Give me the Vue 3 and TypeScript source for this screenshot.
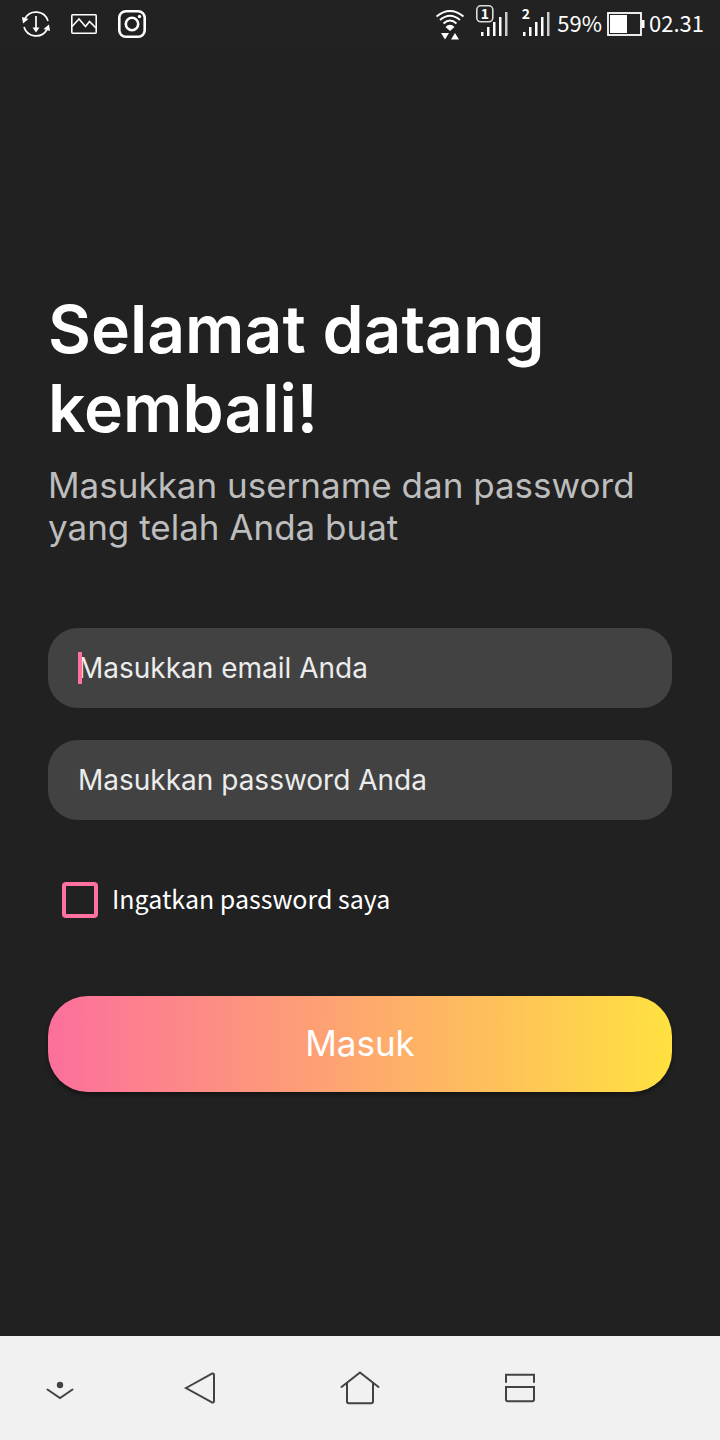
<script setup lang="ts">
import { ref } from 'vue'

interface Signal {
  sim: string
  boxed: boolean
  bars: { x: number; top: number }[]
}

const bars = [
  { x: 6, top: 32 },
  { x: 12, top: 27 },
  { x: 18, top: 22 },
  { x: 24, top: 17 },
  { x: 30, top: 12 },
]

const signals: Signal[] = [
  { sim: '1', boxed: true, bars },
  { sim: '2', boxed: false, bars },
]

const email = ref('')
const password = ref('')
const remember = ref(false)
</script>

<template>
  <div class="screen">
    <header class="status">
      <div class="notices">
        <svg width="28" height="28" viewBox="0 0 28 28" fill="none" stroke="#fff" stroke-width="1.7">
          <path d="M3 8.5A12.6 12.6 0 0 1 26 11" />
          <path d="M25 19.5A12.6 12.6 0 0 1 2 17" />
          <path d="M14 6v14" />
          <path d="M10.5 17.5h7L14 22.500z M0 7l6.500 2-5.500 4.500z M28 21L21.500 19l5.500-4.500z" fill="#fff" stroke="none" />
        </svg>
        <svg width="28" height="28" viewBox="0 0 28 28" fill="none" stroke="#fff" stroke-width="1.6">
          <rect x="1.800" y="4.800" width="24.400" height="18.400" rx="1" />
          <path d="M2 16.500l7-7.500 6.500 7.500 4-5 6.500 6.500" />
        </svg>
        <svg width="28" height="28" viewBox="0 0 28 28" fill="none" stroke="#fff" stroke-width="2.600">
          <rect x="1.300" y="1.300" width="25.400" height="25.400" rx="6.500" />
          <circle cx="14" cy="14" r="6.200" />
          <circle cx="21.500" cy="6.500" r="1.700" fill="#fff" stroke="none" />
        </svg>
      </div>
      <div class="system">
        <svg class="wifi" width="30" height="48" viewBox="0 0 30 48" fill="none" stroke="#fff" stroke-width="1.900">
          <path d="M1.500 16.500Q15 5.500 28.500 16.500M5 20Q15 11.500 25 20M8.500 23.500Q15 17.500 21.500 23.500" />
          <path d="M10.500 27Q15 22.500 19.500 27L15 31z M6 33h8l-4 6.500z M16 39.500h8L20 33z" fill="#fff" stroke="none" />
        </svg>
        <svg v-for="s in signals" :key="s.sim" class="signal" width="35" height="48" viewBox="0 0 35 48">
          <rect v-if="s.boxed" x="1.800" y="5.800" width="16" height="16" rx="4" fill="none" stroke="#ddd" stroke-width="1.600" />
          <text :x="s.boxed ? 10 : 9" y="19" class="sim">{{ s.sim }}</text>
          <rect v-for="b in s.bars" :key="b.x" :x="b.x" :y="b.top" width="2.500" :height="36 - b.top" :fill="b.x === 30 ? '#ccc' : '#fff'" />
        </svg>
        <span class="reading">59%</span>
        <svg class="battery" width="38" height="24" viewBox="0 0 38 24">
          <rect x="1" y="1" width="33" height="22" fill="none" stroke="#fff" stroke-width="1.800" />
          <rect x="3" y="3" width="17" height="18" fill="#fff" />
          <rect x="35" y="8" width="2.500" height="8" fill="#fff" />
        </svg>
        <time class="reading">02.31</time>
      </div>
    </header>

    <main class="content">
      <h1>Selamat datang kembali!</h1>
      <p class="intro">Masukkan username dan password yang telah Anda buat</p>

      <form @submit.prevent>
        <div class="fields">
          <div class="field">
            <input v-model="email" type="email" aria-label="Email" placeholder="Masukkan email Anda" />
            <span v-if="!email" class="caret" aria-hidden="true"></span>
          </div>
          <div class="field">
            <input v-model="password" type="password" aria-label="Password" placeholder="Masukkan password Anda" />
          </div>
        </div>
        <label class="remember">
          <input v-model="remember" type="checkbox" />
          <span>Ingatkan password saya</span>
        </label>
        <button class="submit" type="submit">Masuk</button>
      </form>
    </main>

    <nav class="navbar">
      <button type="button" aria-label="Sembunyikan">
        <svg width="40" height="40" viewBox="0 0 40 40">
          <circle cx="20" cy="17" r="3.200" class="dot" />
          <path d="M7.500 21.500L20 30l12.500-8.500" />
        </svg>
      </button>
      <button type="button" aria-label="Kembali">
        <svg width="40" height="40" viewBox="0 0 40 40">
          <path d="M6 20L31.500 5.800Q34 4.800 34 7V33Q34 35.200 31.500 34.200z" />
        </svg>
      </button>
      <button type="button" aria-label="Beranda">
        <svg width="40" height="40" viewBox="0 0 40 40">
          <path d="M1.500 19L20 4.500 38.500 19" />
          <path d="M7 15V33.500Q7 35.200 8.700 35.200H31.300Q33 35.200 33 33.500V15" />
        </svg>
      </button>
      <button type="button" aria-label="Terbaru">
        <svg width="40" height="40" viewBox="0 0 40 40">
          <path d="M6 14V6.800H34V14" />
          <path d="M6 19H34V31.500Q34 33.200 32.300 33.200H7.700Q6 33.200 6 31.500z" />
        </svg>
      </button>
    </nav>
  </div>
</template>

<style>
body {
  margin: 0;
  background: #212121;
}
</style>

<style scoped>
.screen {
  display: flex;
  flex-direction: column;
  min-height: 100vh;
  background: #212121;
  color: #fff;
  font-family: Inter, "Liberation Sans", sans-serif;
}

.status {
  display: flex;
  justify-content: space-between;
  align-items: center;
  height: 48px;
  padding: 0 16px 0 22px;
  background: #222;
  font-family: "Noto Sans CJK SC", "Noto Sans", sans-serif;
}

.notices,
.system {
  display: flex;
  align-items: center;
}

.notices {
  gap: 20px;
}

.wifi {
  margin-right: 8px;
}

.signal {
  margin: 0 5px 0 2px;
}

.sim {
  fill: #fff;
  font-size: 14px;
  font-weight: 700;
  text-anchor: middle;
}

.reading {
  padding-bottom: 4px;
  font-size: 22px;
  line-height: 44px;
}

.battery {
  margin: 0 4px 0 5px;
}

.content {
  display: flex;
  flex: 1;
  flex-direction: column;
  justify-content: center;
  padding: 0 48px 2px;
}

h1 {
  margin: 0;
  font-size: 66px;
  font-weight: 600;
  line-height: 79px;
}

.intro {
  margin: 16px 0 80px;
  color: #bdbdbd;
  font-size: 35px;
  line-height: 42px;
}

form {
  display: flex;
  flex-direction: column;
}

.fields {
  display: grid;
  gap: 32px;
}

.field {
  position: relative;
}

.field input {
  display: block;
  box-sizing: border-box;
  width: 100%;
  height: 80px;
  padding: 0 30px;
  border: 0;
  border-radius: 30px;
  outline: 0;
  background: #424242;
  color: #fff;
  caret-color: #ff729f;
  font: inherit;
  font-size: 28px;
}

.field input::placeholder {
  color: #ececec;
  opacity: 1;
}

.caret {
  position: absolute;
  top: 24px;
  left: 30px;
  width: 4px;
  height: 32px;
  background: #ff729f;
}

.field input:focus + .caret {
  display: none;
}

.remember {
  display: flex;
  align-items: center;
  align-self: flex-start;
  gap: 14px;
  height: 48px;
  margin: 56px 14px 72px;
  font-family: "Noto Sans CJK SC", "Noto Sans", sans-serif;
  font-size: 25px;
  line-height: 44px;
}

.remember span {
  padding-bottom: 4px;
}

.remember input {
  appearance: none;
  box-sizing: border-box;
  width: 36px;
  height: 36px;
  margin: 0;
  border: 4px solid #ff729f;
  border-radius: 4px;
}

.remember input:checked {
  background: #ff729f;
}

.submit {
  height: 96px;
  padding: 0 0 2px;
  border: 0;
  border-radius: 40px;
  background: linear-gradient(90deg, #fc6f9c, #ffe140);
  box-shadow: 0 3px 4px rgba(0, 0, 0, 0.4);
  color: #fff;
  font: inherit;
  font-size: 35px;
}

.navbar {
  display: grid;
  grid-template-columns: 3fr 4fr 4fr 4fr 3fr;
  height: 104px;
  background: #f1f1f1;
}

.navbar button {
  display: grid;
  place-items: center;
  padding: 0;
  border: 0;
  background: none;
}

.navbar svg {
  fill: none;
  stroke: #424242;
  stroke-width: 2;
  stroke-linecap: round;
}

.navbar .dot {
  fill: #424242;
  stroke: none;
}
</style>
